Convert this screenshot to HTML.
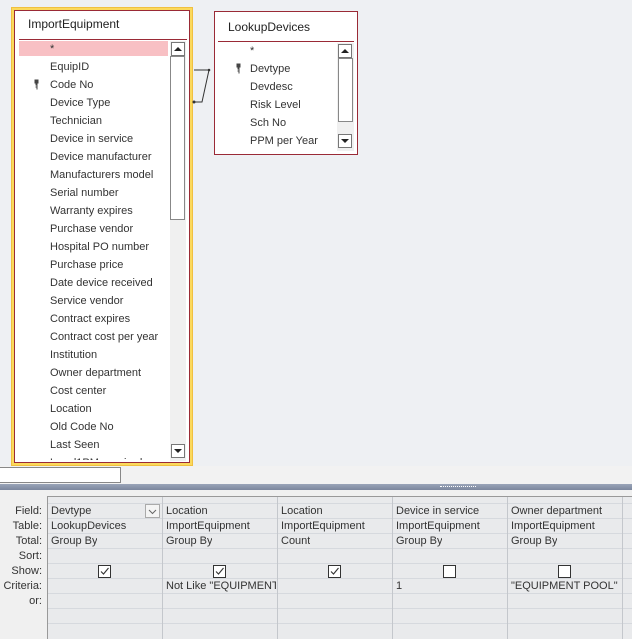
<!DOCTYPE html>
<html><head><meta charset="utf-8"><style>
*{margin:0;padding:0;box-sizing:border-box}
body{width:632px;height:639px;overflow:hidden;background:#eef0f3;font-family:"Liberation Sans",sans-serif;font-size:11px;color:#333;position:relative}
.abs{position:absolute}
.tbl{position:absolute;background:#fff;border:1px solid #9a2a36}
.title{position:absolute;font-size:12px;color:#222}
.sep{position:absolute;height:1px;background:#9a2a36}
.row{position:absolute;left:0;height:18px;line-height:18px;white-space:nowrap}
.sb{position:absolute;background:#f0f0f0}
.btn{position:absolute;width:14px;height:14px;border:1px solid #777;background:#fff}
.thumb{position:absolute;background:#fff;border:1px solid #888}
.lbl{position:absolute;left:0;width:42px;text-align:right;height:15px;line-height:15px;color:#333}
.cell{position:absolute;height:15px;line-height:15px;white-space:nowrap;overflow:hidden}
.hl{position:absolute;height:1px;background:#d6d9de}
.vl{position:absolute;top:497px;width:1px;height:142px;background:#c4c7cc}
.cb{position:absolute;width:13px;height:13px;border:1px solid #333;background:#fff}
.key{position:absolute}
</style></head><body>
<!-- ImportEquipment -->
<div class="abs" style="left:11px;top:7px;width:182px;height:459px;background:#fbd95c;border:1px solid #f0c040"></div>
<div class="tbl" style="left:14px;top:10px;width:176px;height:453px"></div>
<div class="title" style="left:28px;top:17px">ImportEquipment</div>
<div class="sep" style="left:19px;top:39px;width:168px"></div>
<div class="abs" style="left:19px;top:41px;width:149px;height:15px;background:#f8c0c4"></div>
<div class="abs" style="left:19px;top:40px;width:150px;height:420px;overflow:hidden">
<div style="position:relative">
<div class="row" style="top:0;left:31px">*</div>
<div class="row" style="top:18px;left:31px">EquipID</div>
<div class="row" style="top:36px;left:31px">Code No</div>
<div class="row" style="top:54px;left:31px">Device Type</div>
<div class="row" style="top:72px;left:31px">Technician</div>
<div class="row" style="top:90px;left:31px">Device in service</div>
<div class="row" style="top:108px;left:31px">Device manufacturer</div>
<div class="row" style="top:126px;left:31px">Manufacturers model</div>
<div class="row" style="top:144px;left:31px">Serial number</div>
<div class="row" style="top:162px;left:31px">Warranty expires</div>
<div class="row" style="top:180px;left:31px">Purchase vendor</div>
<div class="row" style="top:198px;left:31px">Hospital PO number</div>
<div class="row" style="top:216px;left:31px">Purchase price</div>
<div class="row" style="top:234px;left:31px">Date device received</div>
<div class="row" style="top:252px;left:31px">Service vendor</div>
<div class="row" style="top:270px;left:31px">Contract expires</div>
<div class="row" style="top:288px;left:31px">Contract cost per year</div>
<div class="row" style="top:306px;left:31px">Institution</div>
<div class="row" style="top:324px;left:31px">Owner department</div>
<div class="row" style="top:342px;left:31px">Cost center</div>
<div class="row" style="top:360px;left:31px">Location</div>
<div class="row" style="top:378px;left:31px">Old Code No</div>
<div class="row" style="top:396px;left:31px">Last Seen</div>
<div class="row" style="top:414px;left:31px">Level1PM required</div>
</div></div>
<svg class="key" style="left:34px;top:79px" width="6" height="11"><path d="M0.5 0.5h4v4h-1v6h-1v-2h-1v-1h1v-1h-1v-2h-1z" fill="#444"/></svg>
<div class="sb" style="left:170px;top:41px;width:16px;height:420px"></div>
<div class="thumb" style="left:170px;top:56px;width:15px;height:164px"></div>
<div class="btn" style="left:171px;top:42px"><div style="margin:4px 0 0 2px;width:0;height:0;border-left:4px solid transparent;border-right:4px solid transparent;border-bottom:4px solid #222"></div></div>
<div class="btn" style="left:171px;top:444px"><div style="margin:4px 0 0 2px;width:0;height:0;border-left:4px solid transparent;border-right:4px solid transparent;border-top:4px solid #222"></div></div>
<!-- join line -->
<svg class="abs" style="left:192px;top:60px" width="24" height="50"><path d="M2 10H17L10 42H2" fill="none" stroke="#333" stroke-width="1"/><circle cx="17" cy="10" r="1.3" fill="#333"/><circle cx="2" cy="42" r="1.5" fill="#333"/></svg>
<!-- LookupDevices -->
<div class="tbl" style="left:214px;top:11px;width:144px;height:144px"></div>
<div class="title" style="left:228px;top:20px">LookupDevices</div>
<div class="sep" style="left:218px;top:41px;width:136px"></div>
<div class="row" style="top:42px;left:250px">*</div>
<div class="row" style="top:60px;left:250px">Devtype</div>
<svg class="key" style="left:236px;top:63px" width="6" height="11"><path d="M0.5 0.5h4v4h-1v6h-1v-2h-1v-1h1v-1h-1v-2h-1z" fill="#444"/></svg>
<div class="row" style="top:78px;left:250px">Devdesc</div>
<div class="row" style="top:96px;left:250px">Risk Level</div>
<div class="row" style="top:114px;left:250px">Sch No</div>
<div class="row" style="top:132px;left:250px">PPM per Year</div>
<div class="sb" style="left:337px;top:43px;width:17px;height:108px"></div>
<div class="thumb" style="left:338px;top:58px;width:15px;height:64px"></div>
<div class="btn" style="left:338px;top:44px"><div style="margin:4px 0 0 2px;width:0;height:0;border-left:4px solid transparent;border-right:4px solid transparent;border-bottom:4px solid #222"></div></div>
<div class="btn" style="left:338px;top:134px"><div style="margin:4px 0 0 2px;width:0;height:0;border-left:4px solid transparent;border-right:4px solid transparent;border-top:4px solid #222"></div></div>
<!-- splitter -->
<div class="abs" style="left:0;top:466px;width:632px;height:18px;background:#f2f2f2"></div>
<div class="abs" style="left:-1px;top:467px;width:122px;height:16px;background:#fff;border:1px solid #888"></div>
<div class="abs" style="left:0;top:484px;width:632px;height:6px;background:linear-gradient(#9aa4b8,#7c879e)"></div>
<div class="abs" style="left:440px;top:486px;width:36px;height:2px;border-top:1px dotted #fff"></div>
<!-- grid -->
<div class="abs" style="left:0;top:490px;width:632px;height:149px;background:#f0f0f0"></div>
<div class="abs" style="left:47px;top:496px;width:585px;height:143px;background:#e9eaec;border-top:1px solid #999;border-left:1px solid #999"></div>
<div class="hl" style="top:503px;left:48px;width:584px"></div>
<div class="hl" style="top:518px;left:48px;width:584px"></div>
<div class="hl" style="top:533px;left:48px;width:584px"></div>
<div class="hl" style="top:548px;left:48px;width:584px"></div>
<div class="hl" style="top:563px;left:48px;width:584px"></div>
<div class="hl" style="top:578px;left:48px;width:584px"></div>
<div class="hl" style="top:593px;left:48px;width:584px"></div>
<div class="hl" style="top:608px;left:48px;width:584px"></div>
<div class="hl" style="top:623px;left:48px;width:584px"></div>
<div class="vl" style="left:162px"></div>
<div class="vl" style="left:277px"></div>
<div class="vl" style="left:392px"></div>
<div class="vl" style="left:507px"></div>
<div class="vl" style="left:622px"></div>
<div class="lbl" style="top:504px">Field:</div>
<div class="lbl" style="top:519px">Table:</div>
<div class="lbl" style="top:534px">Total:</div>
<div class="lbl" style="top:549px">Sort:</div>
<div class="lbl" style="top:564px">Show:</div>
<div class="lbl" style="top:579px">Criteria:</div>
<div class="lbl" style="top:594px">or:</div>

<div class="cell" style="left:51px;top:504px">Devtype</div>
<div class="abs" style="left:145px;top:504px;width:15px;height:14px;border:1px solid #aaa;background:#f4f4f4"><svg width="13" height="12"><path d="M3 5l3.5 3.5L10 5" fill="none" stroke="#666"/></svg></div>
<div class="cell" style="left:51px;top:519px">LookupDevices</div>
<div class="cell" style="left:51px;top:534px">Group By</div>

<div class="cell" style="left:166px;top:504px">Location</div>
<div class="cell" style="left:166px;top:519px">ImportEquipment</div>
<div class="cell" style="left:166px;top:534px">Group By</div>
<div class="cell" style="left:166px;top:579px;width:110px">Not Like "EQUIPMENT</div>

<div class="cell" style="left:281px;top:504px">Location</div>
<div class="cell" style="left:281px;top:519px">ImportEquipment</div>
<div class="cell" style="left:281px;top:534px">Count</div>

<div class="cell" style="left:396px;top:504px">Device in service</div>
<div class="cell" style="left:396px;top:519px">ImportEquipment</div>
<div class="cell" style="left:396px;top:534px">Group By</div>
<div class="cell" style="left:396px;top:579px">1</div>

<div class="cell" style="left:511px;top:504px">Owner department</div>
<div class="cell" style="left:511px;top:519px">ImportEquipment</div>
<div class="cell" style="left:511px;top:534px">Group By</div>
<div class="cell" style="left:511px;top:579px">"EQUIPMENT POOL"</div>

<div class="cb" style="left:98px;top:565px"><svg width="11" height="11"><path d="M2 5.5l2.5 2.5L9.5 2" fill="none" stroke="#333" stroke-width="1.1"/></svg></div>
<div class="cb" style="left:213px;top:565px"><svg width="11" height="11"><path d="M2 5.5l2.5 2.5L9.5 2" fill="none" stroke="#333" stroke-width="1.1"/></svg></div>
<div class="cb" style="left:328px;top:565px"><svg width="11" height="11"><path d="M2 5.5l2.5 2.5L9.5 2" fill="none" stroke="#333" stroke-width="1.1"/></svg></div>
<div class="cb" style="left:443px;top:565px"></div>
<div class="cb" style="left:558px;top:565px"></div>
</body></html>
